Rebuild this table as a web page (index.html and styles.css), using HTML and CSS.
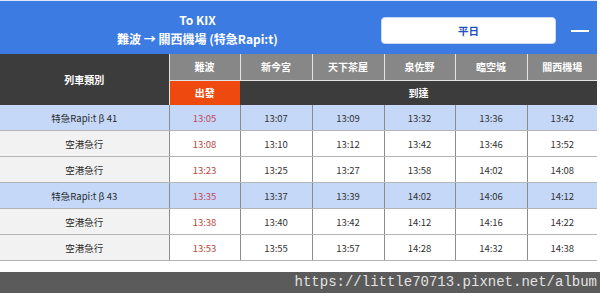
FILE: index.html
```html
<!DOCTYPE html>
<html lang="zh-Hant">
<head>
<meta charset="utf-8">
<link rel="stylesheet" href="styles.css">
</head>
<body>
<div class="page">
  <header class="topbar">
    <div class="title">
      <div class="t1">To KIX</div>
      <div class="t2">難波 → 關西機場 (特急Rapi:t)</div>
    </div>
    <div class="daybtn">平日</div>
    <div class="menu"><span class="dash"></span></div>
  </header>
  <table class="tt">
    <colgroup>
      <col class="c-type"><col class="c71"><col class="c72"><col class="c72"><col class="c71"><col class="c72"><col class="c70">
    </colgroup>
    <thead>
      <tr class="h1">
        <th rowspan="2" class="typehead">列車類別</th>
        <th class="st">難波</th><th class="st">新今宮</th><th class="st">天下茶屋</th><th class="st">泉佐野</th><th class="st">臨空城</th><th class="st">關西機場</th>
      </tr>
      <tr class="h2">
        <th class="dep">出發</th>
        <th colspan="5" class="arr">到達</th>
      </tr>
    </thead>
    <tbody>
      <tr class="rapit"><td class="type">特急Rapi:t β 41</td><td class="first">13:05</td><td>13:07</td><td>13:09</td><td>13:32</td><td>13:36</td><td>13:42</td></tr>
      <tr><td class="type">空港急行</td><td class="first">13:08</td><td>13:10</td><td>13:12</td><td>13:42</td><td>13:46</td><td>13:52</td></tr>
      <tr><td class="type">空港急行</td><td class="first">13:23</td><td>13:25</td><td>13:27</td><td>13:58</td><td>14:02</td><td>14:08</td></tr>
      <tr class="rapit"><td class="type">特急Rapi:t β 43</td><td class="first">13:35</td><td>13:37</td><td>13:39</td><td>14:02</td><td>14:06</td><td>14:12</td></tr>
      <tr><td class="type">空港急行</td><td class="first">13:38</td><td>13:40</td><td>13:42</td><td>14:12</td><td>14:16</td><td>14:22</td></tr>
      <tr><td class="type">空港急行</td><td class="first">13:53</td><td>13:55</td><td>13:57</td><td>14:28</td><td>14:32</td><td>14:38</td></tr>
    </tbody>
  </table>
</div>
<footer class="watermark">https://little70713.pixnet.net/album</footer>
</body>
</html>
```
FILE: styles.css
```css
html, body {
  margin: 0;
  padding: 0;
  background: #ffffff;
  font-family: "Noto Sans CJK TC", "Noto Sans", sans-serif;
}
.page {
  width: 597px;
}
.topbar {
  height: 54px;
  box-sizing: border-box;
  background: #3b7be2;
  border-top: 1px solid #dfe8fb;
  display: flex;
  align-items: center;
}
.title {
  flex: 1;
  padding-left: 14px;
  text-align: center;
  color: #ffffff;
  font-weight: 700;
  font-size: 12px;
  line-height: 19px;
  margin-top: 3px;
}
.daybtn {
  width: 175px;
  height: 27px;
  box-sizing: border-box;
  background: #ffffff;
  border: 1px solid #c9d8f5;
  border-radius: 4px;
  display: flex;
  align-items: center;
  justify-content: center;
  color: #1e50c0;
  font-weight: 700;
  font-size: 10.5px;
  margin-top: 6px;
}
.menu {
  width: 41px;
  display: flex;
  justify-content: flex-start;
  padding-left: 15px;
  box-sizing: border-box;
}
.dash {
  display: block;
  width: 18px;
  height: 2px;
  background: #ffffff;
  margin-top: 6px;
}
.tt {
  width: 597px;
  border-collapse: collapse;
  table-layout: fixed;
}
.c-type { width: 169px; }
.c71 { width: 71px; }
.c72 { width: 72px; }
.c70 { width: 70px; }
.tt th {
  color: #ffffff;
  font-weight: 700;
  font-size: 10px;
  padding: 0;
}
.typehead {
  background: #3c3c3c;
}
.h1 { height: 26px; }
.h2 { height: 25px; }
.st {
  background: #878787;
  border-left: 1px solid #e4e4e4;
}
.dep {
  background: #ee4a10;
  border-left: 1px solid #e4e4e4;
  border-top: 1px solid #e4e4e4;
}
.arr {
  background: #3c3c3c;
  border-top: 1px solid #e4e4e4;
}
.tt td {
  height: 25px;
  padding: 0;
  text-align: center;
  font-size: 9.5px;
  color: #333333;
  border-left: 1px solid #8c8c8c;
  border-bottom: 1px solid #b4b4b4;
  background: #ffffff;
}
.tt td.type {
  border-left: none;
  background: #f2f2f2;
  color: #2a2a2a;
}
.tt td.first {
  color: #b8483c;
}
.tt tr.rapit td {
  background: #c5d8f8;
}
.tt tr.rapit td.first {
  color: #c24a5c;
}
.watermark {
  margin-top: 11px;
  height: 21px;
  background: #5b5b5b;
  color: #e2e2e2;
  font-family: "Liberation Mono", monospace;
  font-size: 14px;
  line-height: 21px;
  text-align: right;
  padding-right: 3px;
}
```
